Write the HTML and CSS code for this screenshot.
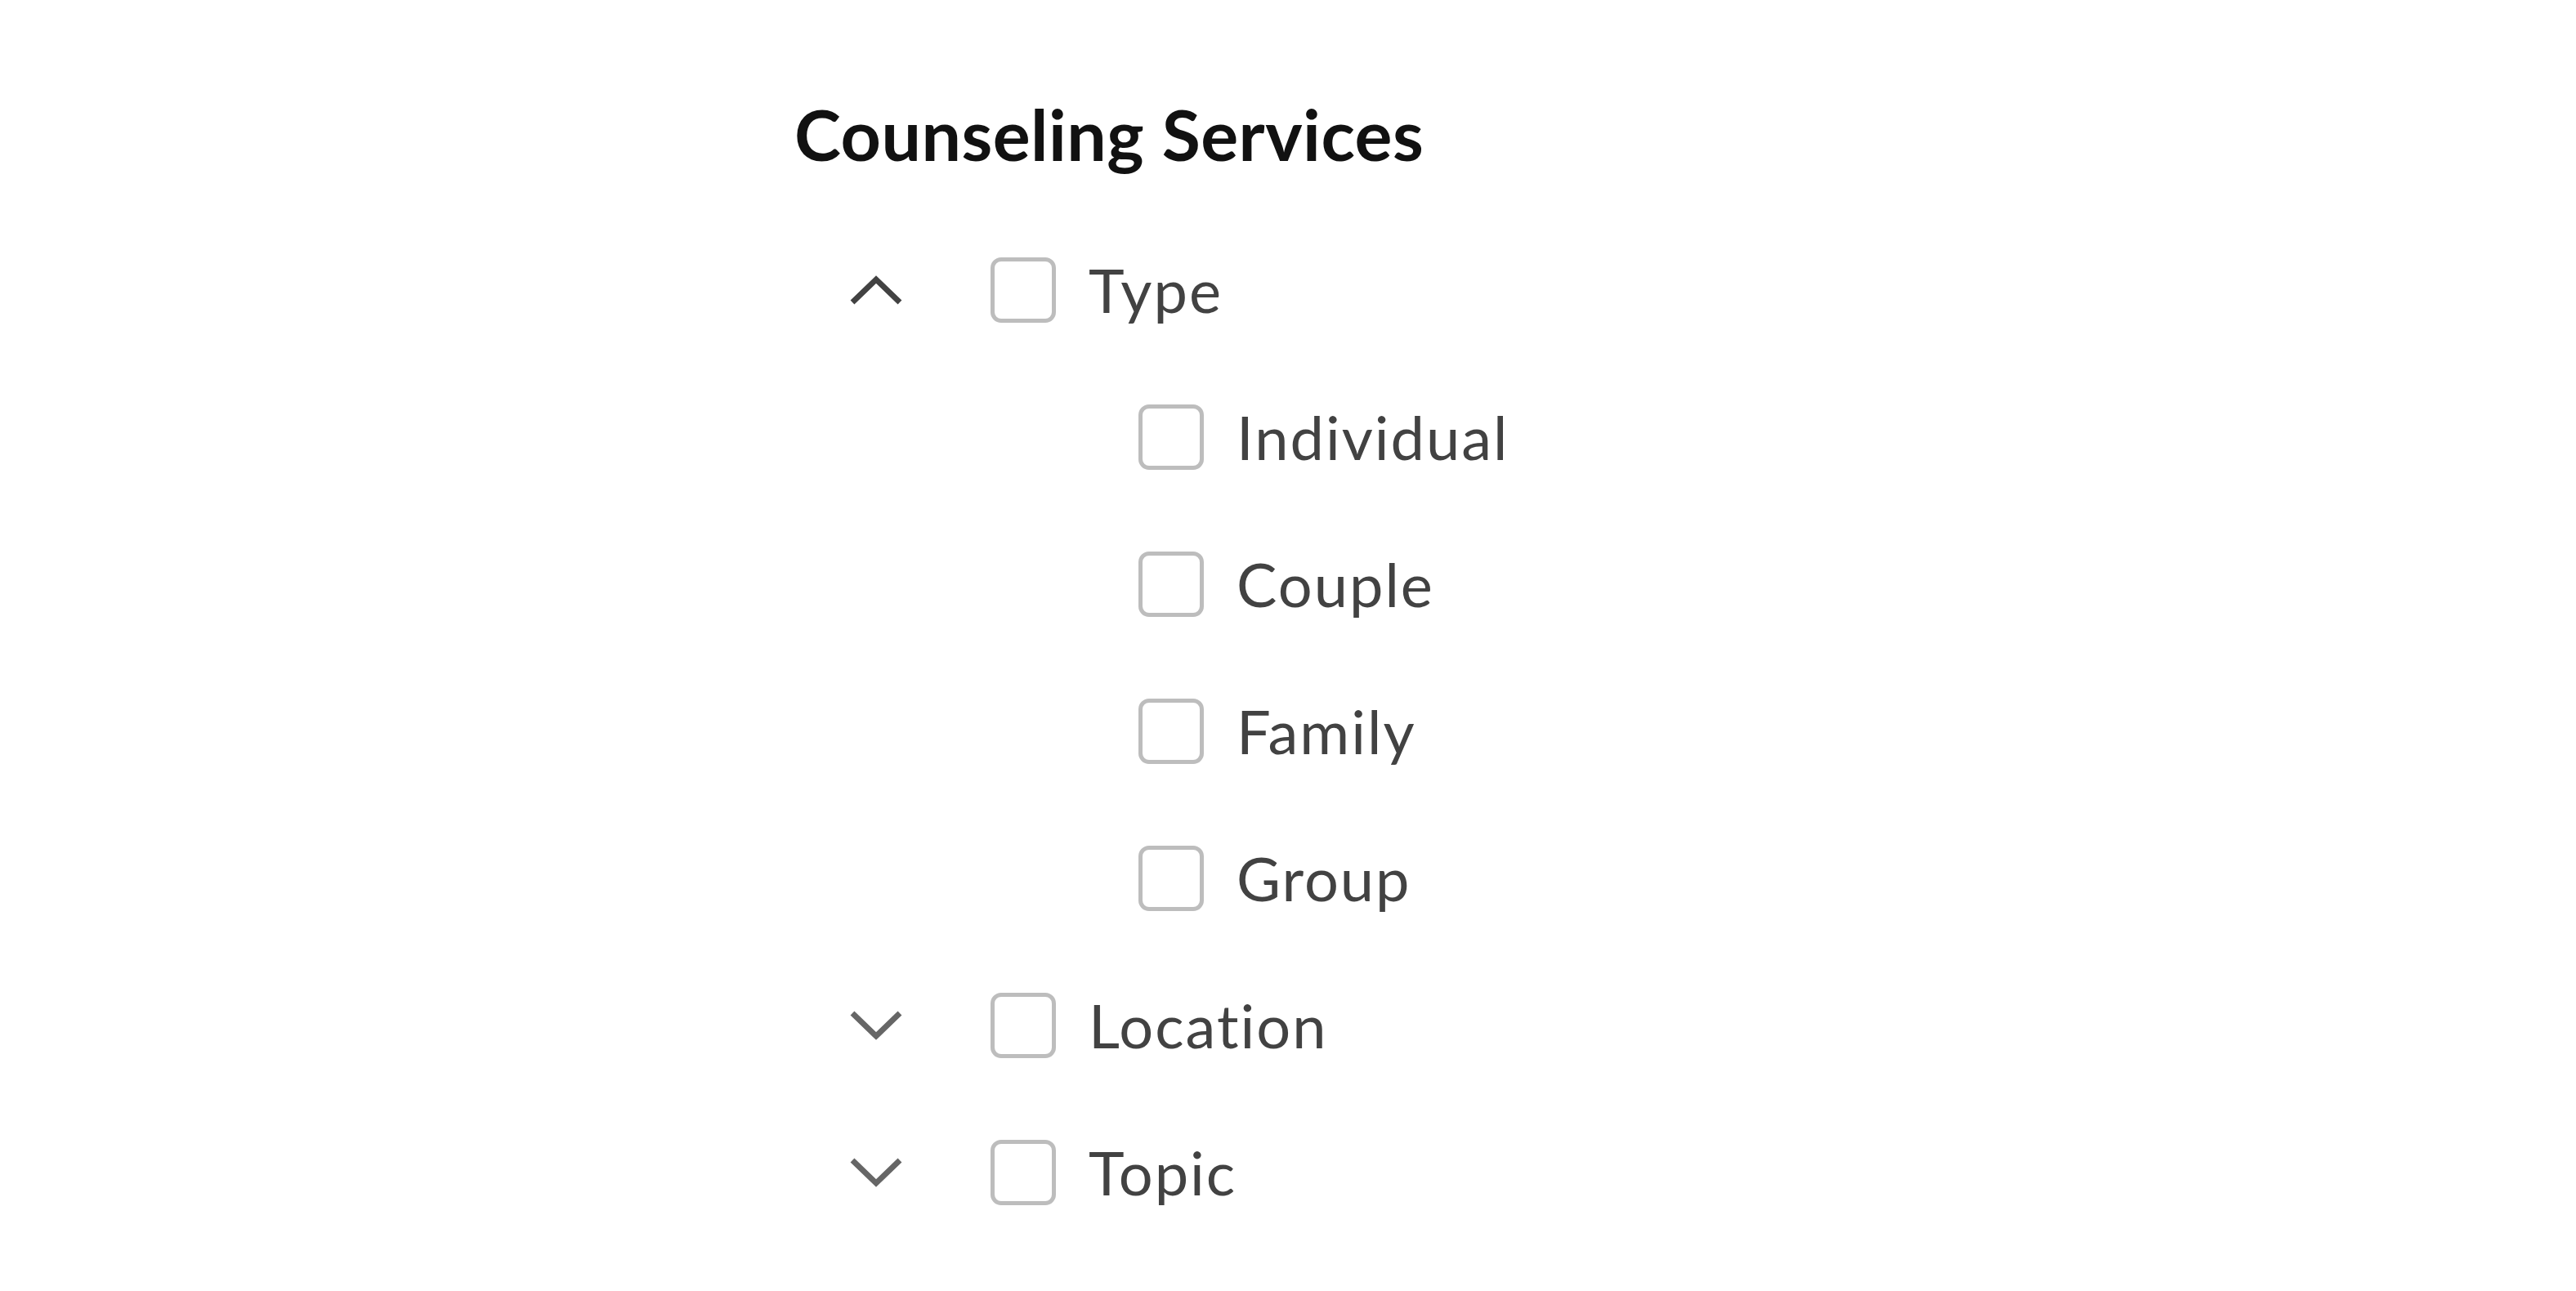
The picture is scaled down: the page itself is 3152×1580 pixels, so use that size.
FILE: index.html
```html
<!DOCTYPE html>
<html lang="en">
<head>
    <meta charset="UTF-8">
    <meta name="viewport" content="width=device-width, initial-scale=1.0">
    <title>Counseling Services</title>
    <link rel="stylesheet" href="styles.css">
</head>
<body>
    <div class="filter">
        <h1 class="filter-title">Counseling Services</h1>

        <ul class="tree">
            <!-- Type (expanded) -->
            <li class="node">
                <div class="row">
                    <button class="toggle open" aria-label="Collapse Type">
                        <svg viewBox="0 0 64 36" width="64" height="36"><polyline points="3,33 32,5 61,33"/></svg>
                    </button>
                    <label class="check">
                        <input type="checkbox">
                        <span class="text">Type</span>
                    </label>
                </div>
                <ul class="children">
                    <li class="row">
                        <label class="check"><input type="checkbox"><span class="text">Individual</span></label>
                    </li>
                    <li class="row">
                        <label class="check"><input type="checkbox"><span class="text">Couple</span></label>
                    </li>
                    <li class="row">
                        <label class="check"><input type="checkbox"><span class="text">Family</span></label>
                    </li>
                    <li class="row">
                        <label class="check"><input type="checkbox"><span class="text">Group</span></label>
                    </li>
                </ul>
            </li>

            <!-- Location (collapsed) -->
            <li class="node">
                <div class="row">
                    <button class="toggle" aria-label="Expand Location">
                        <svg viewBox="0 0 64 36" width="64" height="36"><polyline points="3,3 32,31 61,3"/></svg>
                    </button>
                    <label class="check">
                        <input type="checkbox">
                        <span class="text">Location</span>
                    </label>
                </div>
            </li>

            <!-- Topic (collapsed) -->
            <li class="node">
                <div class="row">
                    <button class="toggle" aria-label="Expand Topic">
                        <svg viewBox="0 0 64 36" width="64" height="36"><polyline points="3,3 32,31 61,3"/></svg>
                    </button>
                    <label class="check">
                        <input type="checkbox">
                        <span class="text">Topic</span>
                    </label>
                </div>
            </li>
        </ul>
    </div>
</body>
</html>
```

FILE: styles.css
```css
body {
    margin: 0;
    background-color: #fff;
    font-family: Lato, "Noto Sans", Arial, sans-serif;
    font-variant-ligatures: none;
    color: #424242;
}
.filter {
    padding: 112px 0 0 972px;
}
.filter-title {
    margin: 0;
    font-size: 86px;
    line-height: 1.2;
    font-weight: 700;
    letter-spacing: 0.5px;
    color: #111;
}
.tree, .children {
    list-style: none;
    margin: 0;
    padding: 0;
}
.tree {
    margin-top: 100px;
    margin-left: 68px;
    display: flex;
    flex-direction: column;
    gap: 100px;
}
.children {
    display: flex;
    flex-direction: column;
    gap: 100px;
    margin-top: 100px;
    padding-left: 353px;
}
.row {
    display: flex;
    align-items: center;
    height: 80px;
}
.toggle {
    width: 64px;
    height: 36px;
    margin-right: 108px;
    padding: 0;
    border: none;
    background: none;
    cursor: pointer;
    display: flex;
}
.toggle svg {
    fill: none;
    stroke: #666;
    stroke-width: 7;
}
.toggle.open svg {
    stroke: #424242;
}
.check {
    display: flex;
    align-items: center;
    gap: 40px;
    cursor: pointer;
}
.check input {
    appearance: none;
    -webkit-appearance: none;
    margin: 0;
    width: 80px;
    height: 80px;
    border: 5px solid #bdbdbd;
    border-radius: 13px;
    background: #fff;
    cursor: pointer;
}
.check .text {
    font-size: 74px;
    line-height: 80px;
    letter-spacing: 2px;
}
```
